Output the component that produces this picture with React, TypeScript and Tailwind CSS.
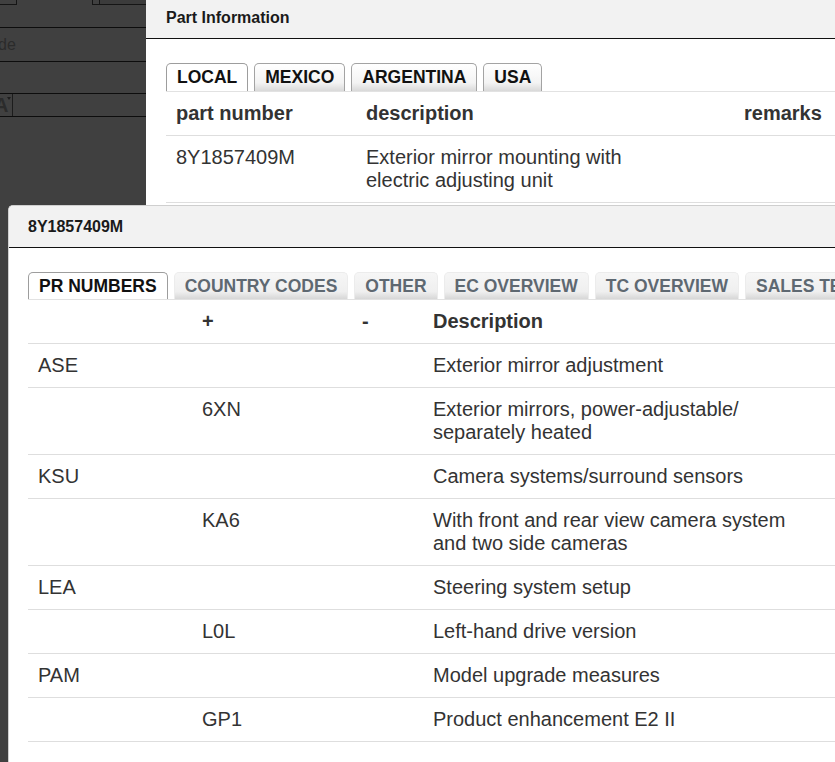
import React from "react";

type TabDef = { label: string; active?: boolean };

function Tabs({ tabs, variant }: { tabs: TabDef[]; variant: "classic" | "soft" }) {
  const pad = variant === "classic" ? "pt-[3px] pb-[4px]" : "py-[3px]";
  return (
    <div className="flex items-end gap-[6px] border-b border-[#e2e2e2] whitespace-nowrap">
      {tabs.map((t) => {
        if (t.active) {
          return (
            <div
              key={t.label}
              className={`px-[10px] ${pad} leading-[20px] text-[17.5px] font-bold text-[#111] bg-white border border-b-0 border-[#9d9d9d] rounded-t-[5px] shrink-0`}
            >
              {t.label}
            </div>
          );
        }
        if (variant === "classic") {
          return (
            <div
              key={t.label}
              className={`px-[10px] ${pad} leading-[20px] text-[17.5px] font-bold text-[#111] bg-[linear-gradient(to_bottom,#ffffff,#f3f3f3_70%,#d9d9d9)] border border-b-0 border-[#a3a3a3] rounded-t-[5px] shrink-0`}
            >
              {t.label}
            </div>
          );
        }
        return (
          <div
            key={t.label}
            className={`px-[10px] ${pad} leading-[20px] text-[17.5px] font-bold text-[#5e6871] bg-[linear-gradient(to_bottom,#f6f6f6,#efefef_72%,#d7d7d7)] border border-b-0 border-[#ececec] rounded-t-[5px] shrink-0`}
          >
            {t.label}
          </div>
        );
      })}
    </div>
  );
}

function LeftPanel() {
  return (
    <div className="w-[146px] shrink-0 flex flex-col bg-[#404040] overflow-hidden">
      <div className="h-[28px] shrink-0 border-b border-[#0d0d0d] flex items-start">
        <div className="w-[17px] h-[5px] border-r border-b border-[#151515]" />
        <div className="ml-[75px] w-[7px] h-[5px] border-l border-b border-[#151515]" />
        <div className="flex-1 h-[5px] border-l border-b border-[#151515] bg-[#3b3b3b]" />
      </div>
      <div className="h-[34px] shrink-0 border-b border-[#0d0d0d] flex items-center">
        <span className="-ml-[2px] text-[16px] leading-[18px] text-[#2b2b2b]">de</span>
      </div>
      <div className="h-[32px] shrink-0 border-b border-[#0d0d0d]" />
      <div className="h-[23px] shrink-0 border-b border-[#0d0d0d] flex items-stretch">
        <div className="w-[13px] border-r border-[#1c1c1c] flex items-start overflow-hidden relative">
          <span className="-ml-[6px] text-[20px] leading-[22px] font-bold text-[#2b2b2b]">A</span>
          <span className="absolute right-[1px] top-[3px] w-0 h-0 border-l-[2px] border-r-[2px] border-t-[3px] border-l-transparent border-r-transparent border-t-[#1e1e1e]" />
        </div>
      </div>
    </div>
  );
}

function PartInfo() {
  const cols = "grid grid-cols-[190px_300px_78px_200px]";
  return (
    <div className="flex-1 min-w-0 bg-white flex flex-col overflow-hidden">
      <div className="h-[39px] shrink-0 bg-[#f2f2f2] border-b border-[#111] pl-[20px] pt-[9px] text-[16px] leading-[18px] font-bold text-[#1a1a1a]">
        Part Information
      </div>
      <div className="pt-[24px] pl-[20px]">
        <Tabs
          variant="classic"
          tabs={[{ label: "LOCAL", active: true }, { label: "MEXICO" }, { label: "ARGENTINA" }, { label: "USA" }]}
        />
        <div className="w-[768px] text-[20px] leading-[23px] text-[#333]">
          <div className={`${cols} border-b border-[#dedede] font-bold`}>
            <div className="px-[10px] py-[10px]">part number</div>
            <div className="px-[10px] py-[10px]">description</div>
            <div className="px-[10px] py-[10px]"></div>
            <div className="px-[10px] py-[10px]">remarks</div>
          </div>
          <div className={`${cols} border-b border-[#dedede]`}>
            <div className="px-[10px] py-[10px]">8Y1857409M</div>
            <div className="px-[10px] py-[10px]">Exterior mirror mounting with electric adjusting unit</div>
            <div className="px-[10px] py-[10px]"></div>
            <div className="px-[10px] py-[10px]"></div>
          </div>
        </div>
      </div>
    </div>
  );
}

const rows: [string, string, string, string][] = [
  ["ASE", "", "", "Exterior mirror adjustment"],
  ["", "6XN", "", "Exterior mirrors, power-adjustable/ separately heated"],
  ["KSU", "", "", "Camera systems/surround sensors"],
  ["", "KA6", "", "With front and rear view camera system and two side cameras"],
  ["LEA", "", "", "Steering system setup"],
  ["", "L0L", "", "Left-hand drive version"],
  ["PAM", "", "", "Model upgrade measures"],
  ["", "GP1", "", "Product enhancement E2 II"],
];

function PrDialog() {
  const cols = "grid grid-cols-[164px_160px_71px_390px_200px]";
  return (
    <div className="flex-1 min-w-0 bg-white rounded-tl-[5px] border-t border-l border-[#cfcfcf] flex flex-col overflow-hidden">
      <div className="h-[42px] shrink-0 bg-[#f2f2f2] border-b border-[#111] pl-[19px] flex items-center text-[16px] leading-[18px] font-bold text-[#1a1a1a]">
        8Y1857409M
      </div>
      <div className="pt-[24px] pl-[19px]">
        <Tabs
          variant="soft"
          tabs={[
            { label: "PR NUMBERS", active: true },
            { label: "COUNTRY CODES" },
            { label: "OTHER" },
            { label: "EC OVERVIEW" },
            { label: "TC OVERVIEW" },
            { label: "SALES TEXTS" },
          ]}
        />
        <div className="w-[985px] text-[20px] leading-[23px] text-[#333]">
          <div className={`${cols} border-b border-[#dedede] font-bold`}>
            <div className="px-[10px] py-[10px]"></div>
            <div className="px-[10px] py-[10px]">+</div>
            <div className="px-[10px] py-[10px]">-</div>
            <div className="px-[10px] py-[10px]">Description</div>
            <div className="px-[10px] py-[10px]"></div>
          </div>
          {rows.map((r, i) => (
            <div key={i} className={`${cols} border-b border-[#dedede]`}>
              <div className="px-[10px] py-[10px]">{r[0]}</div>
              <div className="px-[10px] py-[10px]">{r[1]}</div>
              <div className="px-[10px] py-[10px]">{r[2]}</div>
              <div className="px-[10px] py-[10px]">{r[3]}</div>
              <div className="px-[10px] py-[10px]"></div>
            </div>
          ))}
        </div>
      </div>
    </div>
  );
}

export default function App() {
  return (
    <div className="w-[835px] h-[762px] overflow-hidden bg-[#404040] font-['Liberation_Sans',Arial,sans-serif] flex flex-col">
      <div className="h-[205px] shrink-0 flex">
        <LeftPanel />
        <PartInfo />
      </div>
      <div className="flex-1 min-h-0 flex pl-[8px]">
        <PrDialog />
      </div>
    </div>
  );
}
